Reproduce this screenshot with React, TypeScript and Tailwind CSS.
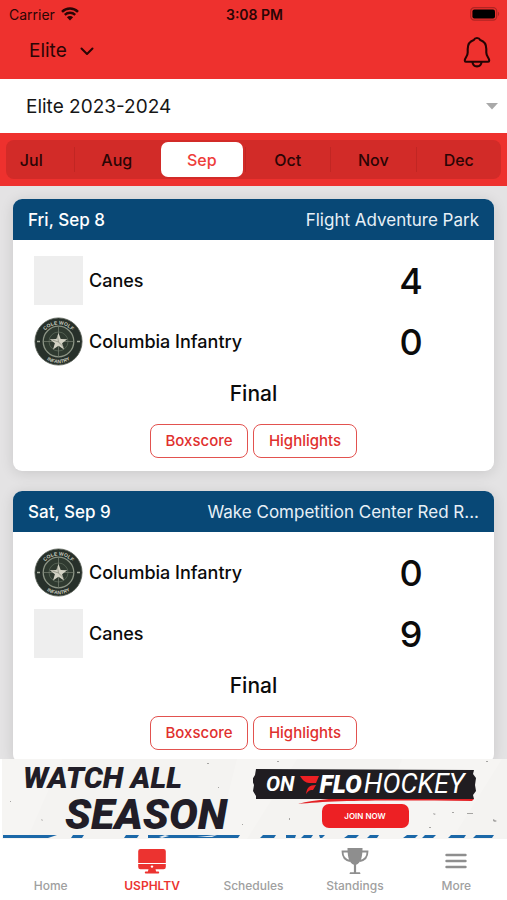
import { useState } from "react";

type Team = { name: string; score: number; logo?: "infantry" };
type Game = { date: string; venue: string; teams: Team[] };

const months = ["Jul", "Aug", "Sep", "Oct", "Nov", "Dec"];

const games: Game[] = [
  {
    date: "Fri, Sep 8",
    venue: "Flight Adventure Park",
    teams: [
      { name: "Canes", score: 4 },
      { name: "Columbia Infantry", score: 0, logo: "infantry" },
    ],
  },
  {
    date: "Sat, Sep 9",
    venue: "Wake Competition Center Red R...",
    teams: [
      { name: "Columbia Infantry", score: 0, logo: "infantry" },
      { name: "Canes", score: 9 },
    ],
  },
];

function WifiIcon() {
  return (
    <svg viewBox="0 0 18 14" className="h-[14px] w-[18px]" fill="none" aria-hidden="true">
      <path d="M1 4.8a11.4 11.4 0 0 1 16 0" stroke="#2a0505" strokeWidth="2.5" />
      <path d="M3.8 7.9a7.4 7.4 0 0 1 10.4 0" stroke="#2a0505" strokeWidth="2.3" />
      <path d="M9 13.4 5.9 10.3a4.4 4.4 0 0 1 6.2 0Z" fill="#2a0505" />
    </svg>
  );
}

function BatteryIcon() {
  return (
    <svg viewBox="0 0 30 14" className="h-[14px] w-[30px]" aria-hidden="true">
      <rect x="0.7" y="0.7" width="26" height="12.4" rx="3.6" fill="none" stroke="#b02523" strokeWidth="1.2" />
      <rect x="2.4" y="2.4" width="22.6" height="9" rx="2" fill="#000" />
      <path d="M28 4.8c1.6.6 1.6 3.6 0 4.2Z" fill="#b02523" />
    </svg>
  );
}

function BellIcon() {
  return (
    <svg viewBox="0 0 28 32" className="h-[32px] w-[28px]" fill="none" stroke="#250404" strokeWidth="2.1" strokeLinejoin="round" strokeLinecap="round" aria-hidden="true">
      <path d="M14 2c-1.500 0-2.600.7-3.200 2C6.700 5.300 4.700 8.600 4.700 13v3.500c0 4-2.900 5.200-2.900 8 0 .8.4 1.200 1 1.200h22.400c.6 0 1-.4 1-1.200 0-2.800-2.900-4-2.900-8V13c0-4.400-2-7.700-6.100-9-.6-1.300-1.700-2-3.200-2Z" />
      <path d="M9.500 26c.2 2.700 1.900 4.400 4.500 4.400s4.300-1.700 4.500-4.400" />
    </svg>
  );
}

function InfantryLogo() {
  return (
    <svg viewBox="0 0 49 49" className="size-[49px] shrink-0" role="img" aria-label="Columbia Infantry logo">
      <defs>
        <path id="arc-top" d="M7 25a17.500 17.500 0 0 1 35 0" />
        <path id="arc-bottom" d="M3.300 25a21.200 21.200 0 0 0 42.400 0" />
      </defs>
      <circle cx="24.500" cy="24.500" r="23.600" fill="#27302a" stroke="#596056" strokeWidth="0.800" />
      <circle cx="24.500" cy="24.500" r="15.300" fill="#2f3a30" stroke="#8c9485" strokeWidth="1.300" />
      <circle cx="24.500" cy="24.500" r="9.500" fill="none" stroke="#5d6a5a" strokeWidth="0.800" />
      <path d="M24.500 10v29M10 24.500h29" stroke="#7a8374" strokeWidth="0.700" />
      <path d="m24.500 16 2.200 6.100 6.500.2-5.100 3.900 1.900 6.300-5.500-3.700-5.500 3.700 1.900-6.300-5.100-3.900 6.500-.2Z" fill="#d3d2c4" />
      <path d="m24.500 25-1-6M24.500 25l5 5M24.500 25l-6-2" stroke="#818577" strokeWidth="0.700" />
      <path d="M3 24.500h3M43 24.500h3" stroke="#a9afa1" strokeWidth="1.500" />
      <text fontSize="5" fontWeight="700" fill="#c9ccbf" fontFamily="Liberation Sans, sans-serif" textAnchor="middle">
        <textPath href="#arc-top" startOffset="50%">COLE WOLF</textPath>
      </text>
      <text fontSize="5" fontWeight="700" fill="#c9ccbf" fontFamily="Liberation Sans, sans-serif" textAnchor="middle">
        <textPath href="#arc-bottom" startOffset="50%">INFANTRY</textPath>
      </text>
    </svg>
  );
}

function TvIcon() {
  return (
    <svg viewBox="0 0 28 26" className="h-[26px] w-[28px]" fill="currentColor" aria-hidden="true">
      <path d="M2.500 1h23A2.300 2.300 0 0 1 27.800 3.300V15H.2V3.300A2.300 2.300 0 0 1 2.500 1Z" />
      <path d="M.2 16h27.600v3a2.300 2.300 0 0 1-2.300 2.300h-8l.6 2.200h2.200c.6 0 .9.4.9 1s-.3 1-.9 1H7.700c-.6 0-.9-.4-.9-1s.3-1 .9-1h2.200l.6-2.200h-8A2.300 2.300 0 0 1 .2 19Z" />
      <circle cx="14" cy="18.600" r="1.200" fill="#fff" />
    </svg>
  );
}

function TrophyIcon() {
  return (
    <svg viewBox="0 0 28 28" className="h-[28px] w-[28px]" aria-hidden="true">
      <path d="M6.500 1h15v1c-.1 8.500-1.700 14-6.400 15.700v7.600h3.200c.8 0 1.100.5 1.100 1.700H8.600c0-1.200.3-1.700 1.100-1.700h3.200v-7.600C8.200 16 6.600 10.500 6.500 2Z" fill="#8e8e8e" />
      <path d="M7 4.500H1.500C1.500 9 3.500 13 9 14M21 4.500h5.500C26.500 9 24.500 13 19 14" fill="none" stroke="#8e8e8e" strokeWidth="1.800" />
    </svg>
  );
}

function MenuIcon() {
  return (
    <svg viewBox="0 0 22 16" className="h-[16px] w-[22px]" stroke="#8e8e8e" strokeWidth="2.400" strokeLinecap="round" aria-hidden="true">
      <path d="M1.500 2h19M1.500 8h19M1.500 14h19" />
    </svg>
  );
}

function GameCard({ game }: { game: Game }) {
  return (
    <article className="shrink-0 overflow-hidden rounded-[9px] bg-white shadow-[0_2px_14px_rgba(0,0,0,0.12)]">
      <header className="flex h-[41px] items-center justify-between bg-[#084876] px-[15px] pt-[2px] text-[17px] text-white">
        <h2 className="font-medium">{game.date}</h2>
        <p className="text-[#e7f0f7]">{game.venue}</p>
      </header>
      <div className="flex flex-col gap-3 pt-4 pr-[59px] pl-[21px]">
        {game.teams.map((team) => (
          <div key={team.name} className="flex h-[49px] items-center">
            {team.logo ? <InfantryLogo /> : <span className="size-[49px] shrink-0 bg-[#eeeeee]" />}
            <span className="ml-[6px] flex-1 text-[18px] font-medium">{team.name}</span>
            <span className="w-12 text-center text-[36px] leading-[40px] font-medium">{team.score}</span>
          </div>
        ))}
      </div>
      <p className="mt-[14px] text-center text-[21px] leading-[28px] font-medium">Final</p>
      <div className="mt-4 mb-[13px] flex justify-center gap-[5px] text-[15px] font-medium text-[#df302e]">
        <button className="h-[34px] w-[98px] rounded-[8px] border border-[#e2524f]">Boxscore</button>
        <button className="h-[34px] w-[104px] rounded-[8px] border border-[#e2524f]">Highlights</button>
      </div>
    </article>
  );
}

function Banner() {
  return (
    <a href="#join" className="relative ml-[2px] flex h-[80px] shrink-0 overflow-hidden bg-[#f4f3f1] font-[Roboto,sans-serif] italic">
      <svg viewBox="0 0 505 80" preserveAspectRatio="none" className="absolute inset-0 size-full" aria-hidden="true">
        <path d="M0 0h60L25 80H0ZM235 0h60l-50 80h-30ZM400 0h100l-50 80h-80Z" fill="#f6f5f3" />
        <g fill="#a6a5a3">
          <path d="m39 60 2 1-1 1ZM8 42h1v1H8ZM216 28h1v1h-1ZM205 4h2v1h-2ZM275 2h2v1h-2ZM287 59h1v2h-1ZM431 54l3 1-2 1ZM450 53h2v1h-2ZM465 54h6v1h-6ZM427 68h2v1h-2ZM491 60l4 2-2 1-2-1ZM484 2h2v1h-2ZM240 65h1v1h-1Z" />
        </g>
        <g fill="#1b68a8">
          <path d="M1 76h54l-9 3H1ZM71 76h11l-2 3H69ZM124 76h13l-2 3h-13ZM146 76h92l-2 3h-90ZM261 76h13l-2 3h-14ZM284 76h10l-1 3h-9ZM302 76h9l-2 3h-10ZM317 76h6l-3 3h-2ZM346 76h11l-3 3h-12ZM368 76h9l-2 3h-10ZM405 76h11l-3 3h-12ZM423 76h11l-3 3h-11ZM449 76h15l-2 3h-16ZM474 76h18l-2 3h-19Z" />
        </g>
        <path d="m157 78 6-2 4 1-7 2ZM195 78l20-2-5 2h-10Z" fill="#e5ecf2" />
      </svg>
      <div className="relative w-[251px] shrink-0 pt-px pl-[21px] font-black text-[#211d27]">
        <p className="text-[30px] leading-[36px]">WATCH ALL</p>
        <p className="pl-[42px] text-[43px] leading-[36px]">SEASON</p>
      </div>
      <div className="relative flex w-[224px] shrink-0 flex-col items-center pt-[10px]">
        <svg viewBox="0 0 224 36" className="absolute top-[10px] left-0 h-[36px] w-[224px]" aria-hidden="true">
          <path d="M45 35c26-7 70-7 125-5h51l-2 2c-80-1-140-1-174 3Z" fill="#e32125" />
          <path d="m3 0 218 1-1 4 3 4-1 7 1 6-3 4 1 4H3v-3l-3-5 1-6-2-5 3-5Z" fill="#201d21" />
        </svg>
        <p className="relative flex h-[31px] w-full items-center pl-[13px] leading-[31px] text-white">
          <span className="text-[21px] font-bold">ON</span>
          <svg viewBox="0 0 19 18" className="ml-[6px] h-[18px] w-[19px]" aria-hidden="true">
            <path d="M0 0h19l-3 7H9Q4 7 0 0ZM6 18c1-6 3-9 10-9l-3 5c-3 0-4 0-7 4Z" fill="#ee2023" />
          </svg>
          <span className="text-[25px] font-black">FLO</span>
          <span className="ml-[2px] text-[27px]">HOCKEY</span>
        </p>
        <span className="relative mt-[4px] flex h-[24px] w-[87px] items-center justify-center rounded-[7px] bg-[#ed2024] font-[Inter,sans-serif] text-[8px] font-semibold text-white not-italic">
          JOIN NOW
        </span>
      </div>
    </a>
  );
}

const tabs = [
  { label: "Home", icon: null },
  { label: "USPHLTV", icon: <TvIcon /> },
  { label: "Schedules", icon: null },
  { label: "Standings", icon: <TrophyIcon /> },
  { label: "More", icon: <MenuIcon /> },
];

export default function App() {
  const [month, setMonth] = useState("Sep");
  const [tab, setTab] = useState("USPHLTV");

  return (
    <div className="flex h-screen flex-col overflow-hidden bg-[#e4e3e4] font-[Inter,sans-serif] text-[#0b0b0b]">
      <header className="shrink-0 bg-[#ee312e] text-[#2a0505]">
        <div className="grid h-[28px] grid-cols-3 items-center pr-[7px] pl-[9px] text-[14px]">
          <span className="flex items-center gap-[6px]">
            Carrier <WifiIcon />
          </span>
          <span className="text-center font-semibold">3:08 PM</span>
          <span className="flex justify-end">
            <BatteryIcon />
          </span>
        </div>
        <div className="flex h-[51px] items-start justify-between pt-[8px] pr-[16px] pl-[29px]">
          <button className="flex items-center gap-[13px] text-[19px] leading-[30px]">
            Elite
            <svg viewBox="0 0 14 9" className="h-[9px] w-[14px]" fill="none" stroke="currentColor" strokeWidth="2" strokeLinecap="round" strokeLinejoin="round" aria-hidden="true">
              <path d="m1.500 1.500 5.500 5.500 5.500-5.500" />
            </svg>
          </button>
          <button aria-label="Notifications">
            <BellIcon />
          </button>
        </div>
      </header>

      <div className="relative h-[54px] shrink-0 bg-white">
        <select aria-label="Season" className="size-full appearance-none bg-transparent pt-[2px] pl-[26px] text-[19px] text-[#161616]">
          <option>Elite 2023-2024</option>
        </select>
        <svg viewBox="0 0 12 7" className="pointer-events-none absolute top-[24px] right-[9px] h-[7px] w-[12px]" aria-hidden="true">
          <path d="M0 0h12L6 6.500Z" fill="#a9a9a9" />
        </svg>
      </div>

      <div className="shrink-0 bg-[#ee312e] px-[6px] py-[7px]">
        <div className="flex h-[39px] justify-end overflow-hidden rounded-[8px] bg-[#d22b28]">
          <div className="grid w-[calc(100%+18px)] shrink-0 grid-cols-6">
            {months.map((m) => (
              <button
                key={m}
                onClick={() => setMonth(m)}
                aria-pressed={m === month}
                className={
                  m === month
                    ? "mx-[2px] my-[2px] rounded-[7px] bg-white text-[16px] font-medium text-[#ee3d3a]"
                    : "my-[7px] border-l border-[#c12623] text-[16px] font-medium text-[#2a0505]"
                }
              >
                {m}
              </button>
            ))}
          </div>
        </div>
      </div>

      <main className="flex min-h-0 flex-1 flex-col gap-5 overflow-y-auto px-[13px] pt-[13px] [scrollbar-width:none]">
        {games.map((game) => (
          <GameCard key={game.date} game={game} />
        ))}
      </main>

      <div className="shrink-0 bg-white">
        <Banner />
      </div>

      <nav className="grid h-[61px] shrink-0 grid-cols-5 bg-white">
        {tabs.map((t) => (
          <button
            key={t.label}
            onClick={() => setTab(t.label)}
            className={
              t.label === tab
                ? "flex flex-col items-center pt-[7px] text-[12px] font-semibold text-[#ec3330]"
                : "flex flex-col items-center pt-[7px] text-[12px] font-medium text-[#a0a0a0]"
            }
          >
            <span className="flex h-[30px] items-center">{t.icon}</span>
            <span className="leading-[20px]">{t.label}</span>
          </button>
        ))}
      </nav>
    </div>
  );
}
